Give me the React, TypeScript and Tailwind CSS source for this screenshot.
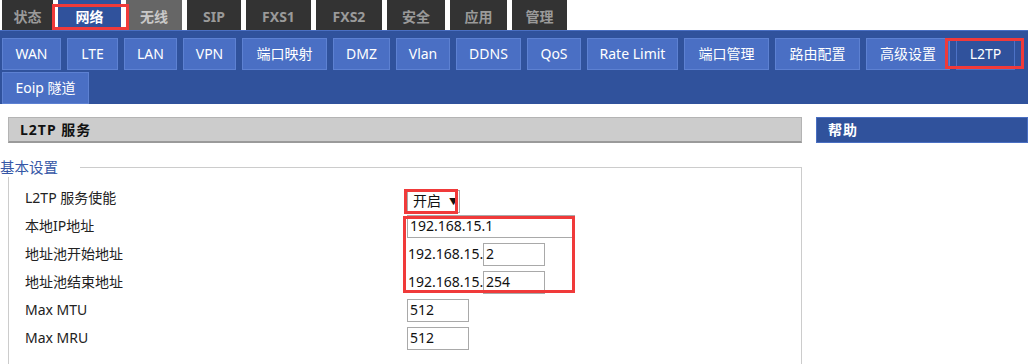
import React from "react";

const FONT = "font-['Noto_Sans','Noto_Sans_CJK_SC',sans-serif]";

type TopTab = { label: string; w: string; kind: "dark" | "active" | "dim" };

const TOP_TABS: TopTab[] = [
  { label: "状态", w: "w-[51px]", kind: "dark" },
  { label: "网络", w: "w-[63px]", kind: "active" },
  { label: "无线", w: "w-[56px]", kind: "dim" },
  { label: "SIP", w: "w-[54px]", kind: "dark" },
  { label: "FXS1", w: "w-[65px]", kind: "dark" },
  { label: "FXS2", w: "w-[66px]", kind: "dark" },
  { label: "安全", w: "w-[58px]", kind: "dark" },
  { label: "应用", w: "w-[57px]", kind: "dark" },
  { label: "管理", w: "w-[55px]", kind: "dark" },
];

const TOP_STYLE: Record<TopTab["kind"], string> = {
  dark: "bg-[#333333] text-[#9a9a9a]",
  active: "bg-[#30529c] text-white",
  dim: "bg-[#666666] text-[#c8c8c8]",
};

const SUB_TABS: { label: string; w: string; active?: boolean }[] = [
  { label: "WAN", w: "w-[59px]" },
  { label: "LTE", w: "w-[51px]" },
  { label: "LAN", w: "w-[53px]" },
  { label: "VPN", w: "w-[53px]" },
  { label: "端口映射", w: "w-[85px]" },
  { label: "DMZ", w: "w-[57px]" },
  { label: "Vlan", w: "w-[54px]" },
  { label: "DDNS", w: "w-[65px]" },
  { label: "QoS", w: "w-[54px]" },
  { label: "Rate Limit", w: "w-[91px]" },
  { label: "端口管理", w: "w-[85px]" },
  { label: "路由配置", w: "w-[85px]" },
  { label: "高级设置", w: "w-[84px]" },
  { label: "L2TP", w: "w-[59px]", active: true },
  { label: "Eoip 隧道", w: "w-[87px]" },
];

function Box({ className }: { className: string }) {
  return <div className={`pointer-events-none absolute border-[3px] border-[#f03a3a] ${className}`} />;
}

function Input({ value, w }: { value: string; w: string }) {
  return (
    <div className={`flex h-[23px] items-center border border-[#a9a9a9] bg-white pl-[2px] text-[14px] leading-none text-[#111] ${w}`}>
      {value}
    </div>
  );
}

function Row({ label, children }: { label: string; children: React.ReactNode }) {
  return (
    <div className="flex h-[28px] items-center">
      <div className="w-[382px] text-[14px] leading-none text-[#222]">{label}</div>
      <div className="flex items-center">{children}</div>
    </div>
  );
}

export default function App() {
  return (
    <div className={`relative h-[364px] w-[1028px] overflow-hidden bg-white ${FONT}`}>
      {/* top menu */}
      <div className="flex h-[30px] gap-[5px] pl-[2px]">
        {TOP_TABS.map((t) => (
          <div
            key={t.label}
            className={`flex h-full items-center justify-center pt-[4px] text-[14px] font-bold leading-none ${t.w} ${TOP_STYLE[t.kind]}`}
          >
            {t.label}
          </div>
        ))}
      </div>

      {/* sub menu */}
      <div className="flex h-[74px] flex-wrap content-start gap-x-[6px] gap-y-[2px] border-t border-[#4a6fc2] bg-[#30529c] px-[2px] pt-[7px]">
        {SUB_TABS.map((s) => (
          <div
            key={s.label}
            className={`flex h-[32px] items-center justify-center border text-[14px] leading-none text-white ${s.w} ${
              s.active ? "border-[#4d72c6] bg-[#30529c]" : "border-[#5d81d2] bg-[#4a6fc4]"
            }`}
          >
            {s.label}
          </div>
        ))}
      </div>

      {/* content */}
      <div className="mt-[13px] flex">
        <div className="w-[802px]">
          <div className="ml-[8px] flex h-[26px] items-center border border-b-2 border-[#b4b4b4] border-b-[#9a9a9a] bg-[#cccccc] pl-[11px] text-[14px] font-bold leading-none tracking-[1px] text-[#111]">
            L2TP 服务
          </div>

          <div className="mt-[14px] flex h-[20px] items-center">
            <span className="w-[80px] text-[14.5px] leading-none text-[#3657a6]">基本设置</span>
            <div className="h-[10px] flex-1 self-end border-r border-t border-[#cccccc]" />
          </div>
          <div className="ml-[8px] border-l border-r border-[#cccccc] pb-[20px] pl-[16px] pt-[7px]">
            <Row label="L2TP 服务使能">
              <div className="mt-[6px] flex h-[23px] w-[53px] items-center border border-[#a9a9a9] pl-[5px] text-[14px] leading-none text-[#111]">
                开启
                <span className="ml-[8px] text-[9px]">▼</span>
              </div>
            </Row>
            <Row label="本地IP地址">
              <Input value="192.168.15.1" w="w-[168px]" />
            </Row>
            <Row label="地址池开始地址">
              <span className="w-[76px] pl-[1px] text-[14px] leading-none text-[#111]">192.168.15.</span>
              <Input value="2" w="w-[62px]" />
            </Row>
            <Row label="地址池结束地址">
              <span className="w-[76px] pl-[1px] text-[14px] leading-none text-[#111]">192.168.15.</span>
              <Input value="254" w="w-[62px]" />
            </Row>
            <Row label="Max MTU">
              <Input value="512" w="w-[62px]" />
            </Row>
            <Row label="Max MRU">
              <Input value="512" w="w-[62px]" />
            </Row>
          </div>
        </div>

        <div className="ml-[14px] flex-1">
          <div className="flex h-[26px] items-center border border-[#4a6fc2] bg-[#30529c] pl-[11px] text-[14px] font-bold leading-none tracking-[1px] text-white">
            帮助
          </div>
        </div>
      </div>

      {/* annotation boxes */}
      <Box className="left-[52px] top-[4px] h-[26px] w-[77px]" />
      <Box className="left-[945px] top-[38px] h-[31px] w-[79px]" />
      <Box className="left-[404px] top-[189px] h-[25px] w-[54px]" />
      <Box className="left-[403px] top-[216px] h-[77px] w-[172px]" />
    </div>
  );
}
